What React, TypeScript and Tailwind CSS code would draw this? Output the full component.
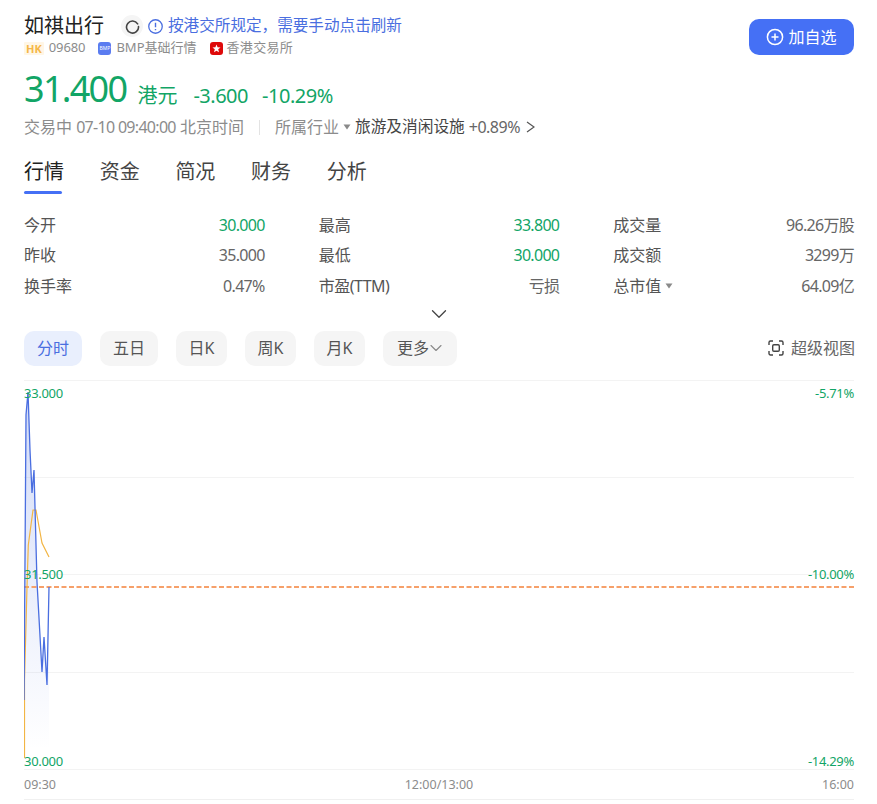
import { ChevronDown } from "lucide-react";

const font = "font-['Noto_Sans','Noto_Sans_CJK_SC',sans-serif]";

const stats = [
  { label: "今开", value: "30.000", green: true },
  { label: "最高", value: "33.800", green: true },
  { label: "成交量", value: "96.26万股" },
  { label: "昨收", value: "35.000" },
  { label: "最低", value: "30.000", green: true },
  { label: "成交额", value: "3299万" },
  { label: "换手率", value: "0.47%" },
  { label: "市盈(TTM)", value: "亏损", tight: true },
  { label: "总市值", value: "64.09亿", caret: true },
];

const tabs = ["行情", "资金", "简况", "财务", "分析"];
const ranges = ["五日", "日K", "周K", "月K"];

function Caret() {
  return (
    <svg width="8" height="6" viewBox="0 0 8 6" className="ml-1">
      <path d="M0.5 0.5h7L4 5.5z" fill="#8a8a8a" />
    </svg>
  );
}

function Chart() {
  // coordinates are page pixels minus the chart's top-left (24, 380)
  const blue = "M0 320L1 180L2 35L4 12L6 70L8 113L10 90L13 202L18 292L20 257L23 305L25 207";
  const orange = "M0.5 378L0.5 300L3 207L4.3 165L9 130L12 130L18 163L25 177";
  return (
    <svg width="830" height="390" viewBox="0 0 830 390" className="block">
      <defs>
        <linearGradient id="area" x1="0" y1="0" x2="0" y2="1">
          <stop offset="0" stopColor="#4a6ee0" stopOpacity="0.25" />
          <stop offset="1" stopColor="#4a6ee0" stopOpacity="0" />
        </linearGradient>
      </defs>
      {[0.5, 97.5, 194.5, 292.5, 389.5].map((y) => (
        <line key={y} x1="0" x2="830" y1={y} y2={y} stroke="#f3f3f3" />
      ))}
      <path d={blue + "L25 370L0 370Z"} fill="url(#area)" />
      <line x1="0" x2="830" y1="207" y2="207" stroke="#f6a06a" strokeWidth="2" strokeDasharray="5 2.5" />
      <path d={orange} fill="none" stroke="#f2b544" strokeWidth="1.2" />
      <path d={blue} fill="none" stroke="#4a6ee0" strokeWidth="1.3" />
    </svg>
  );
}

export default function App() {
  return (
    <main className={`${font} w-[877px] h-[804px] overflow-hidden bg-white pl-6 pr-[23px] pt-[14px] text-[#333]`}>
      <header className="flex items-start justify-between">
        <div>
          <div className="flex items-center h-[24px]">
            <h1 className="text-xl leading-6 text-[#222]">如祺出行</h1>
            <span className="ml-[17px] flex h-[22px] w-[22px] items-center justify-center rounded-full bg-[#f5f5f5]">
              <svg width="15" height="15" viewBox="0 0 14 14" fill="none">
                <path d="M11.8 4.6A5.6 5.6 0 1 0 12.6 7" stroke="#444" strokeWidth="1.5" strokeLinecap="round" />
              </svg>
            </span>
            <svg width="15" height="15" viewBox="0 0 14 14" fill="none" className="ml-[5px]">
              <circle cx="7" cy="7" r="6.3" stroke="#4a6ee0" strokeWidth="1.2" />
              <path d="M7 3.5v4.2M7 9.4v1" stroke="#4a6ee0" strokeWidth="1.3" />
            </svg>
            <span className="ml-[5px] text-[15.6px] text-[#4a6ee0]">按港交所规定，需要手动点击刷新</span>
          </div>
          <div className="mt-[1px] flex h-[18px] items-center text-[13px] text-[#8c8c8c]">
            <span className="rounded-[1px] bg-[#fff6e6] px-[2px] text-[11px] leading-[13px] font-bold text-[#f5b748]">HK</span>
            <span className="ml-[5px] tracking-[-0.1px]">09680</span>
            <span className="ml-[13px] flex h-[13px] w-[13px] items-center justify-center rounded-[3px] bg-[#5b7cf0] text-[5px] leading-none text-white">BMP</span>
            <span className="ml-[5px]">BMP基础行情</span>
            <span className="ml-[13px] flex h-[13px] w-[13px] items-center justify-center rounded-[3px] bg-[#de0a0a]">
              <svg width="9" height="9" viewBox="0 0 10 10">
                <path d="M5 0.5L6.2 3.6L9.5 3.8L6.9 5.9L7.8 9.2L5 7.4L2.2 9.2L3.1 5.9L0.5 3.8L3.8 3.6Z" fill="white" />
              </svg>
            </span>
            <span className="ml-[4px] tracking-[0.3px]">香港交易所</span>
          </div>
        </div>
        <button className="mt-[5px] flex h-[36px] w-[105px] items-center justify-center gap-[4px] rounded-[10px] bg-[#4570f5] text-base text-white">
          <svg width="18" height="18" viewBox="0 0 18 18" fill="none" stroke="white" strokeWidth="1.5">
            <circle cx="9" cy="9" r="7.6" />
            <path d="M9 5.5v7M5.5 9h7" />
          </svg>
          加自选
        </button>
      </header>

      <div className="mt-[10px] flex h-[44px] items-end text-[#12a566]">
        <span className="text-[36px] leading-[44px] tracking-[-1.7px]">31.400</span>
        <span className="ml-[11px] mb-[3px] text-xl leading-6">港元</span>
        <span className="ml-[16px] mb-[3px] text-xl leading-6 tracking-[-0.5px]">-3.600</span>
        <span className="ml-[14px] mb-[3px] text-xl leading-6 tracking-[-0.45px]">-10.29%</span>
      </div>

      <div className="mt-[6px] flex h-[20px] items-center text-base text-[#8c8c8c]">
        <span>
          交易中 <span className="tracking-[-0.7px]">07-10 09:40:00</span> 北京时间
        </span>
        <span className="ml-[15px] mr-[15px] h-[15px] w-px bg-[#e3e3e3]" />
        <span>所属行业</span>
        <Caret />
        <span className="ml-[4px] text-[15.7px] text-[#444]">旅游及消闲设施</span>
        <span className="ml-[4px] tracking-[-0.5px] text-[#666]">+0.89%</span>
        <svg width="9" height="12" viewBox="0 0 9 12" fill="none" stroke="#555" strokeWidth="1.2" className="ml-[6px]">
          <path d="M1 1l7 5l-7 5" />
        </svg>
      </div>

      <nav className="mt-[21px] flex h-[51.5px] gap-[35.7px] text-[#444]">
        {tabs.map((tab, i) => (
          <div key={tab} className="relative h-[52px] text-xl leading-7">
            <span className={i === 0 ? "text-[#222]" : ""}>{tab}</span>
            {i === 0 && <span className="absolute bottom-[16px] left-0 h-[3px] w-[38px] rounded-sm bg-[#4570f5]" />}
          </div>
        ))}
      </nav>

      <section className="grid grid-cols-3 gap-x-[54px] text-base">
        {stats.map((s) => (
          <div key={s.label} className="flex h-[30.5px] items-center justify-between">
            <span className={`flex items-center text-[#555] ${s.tight ? "tracking-[-0.5px]" : ""}`}>
              {s.label}
              {s.caret && <Caret />}
            </span>
            <span className={`tracking-[-0.7px] ${s.green ? "text-[#12a566]" : "text-[#666]"}`}>{s.value}</span>
          </div>
        ))}
      </section>

      <div className="flex h-[21.5px] items-center justify-center pt-[4px]">
        <ChevronDown size={26} strokeWidth={1.2} className="text-[#444]" />
      </div>

      <div className="mt-[8px] flex items-center justify-between">
        <div className="flex gap-[18px] text-base text-[#555]">
          <span className="flex h-[35px] w-[58px] items-center justify-center rounded-[10px] bg-[#e9effd] text-[#4a6ee0]">分时</span>
          {ranges.map((r, i) => (
            <span key={r} className={`flex h-[35px] items-center justify-center rounded-[10px] bg-[#f5f5f5] ${i === 0 ? "w-[58px]" : "w-[51px]"}`}>
              {r}
            </span>
          ))}
          <span className="flex h-[35px] w-[74px] items-center justify-center rounded-[10px] bg-[#f5f5f5]">
            更多
            <ChevronDown size={20} strokeWidth={1.3} className="-mr-[3px] -ml-[3px] text-[#888]" />
          </span>
        </div>
        <div className="-mr-px flex items-center gap-[7px] text-base text-[#666]">
          <svg width="16" height="16" viewBox="0 0 16 16" fill="none" stroke="#444" strokeWidth="1.4">
            <path d="M1 5V2.5A1.5 1.5 0 0 1 2.5 1H5M11 1h2.5A1.5 1.5 0 0 1 15 2.5V5M15 11v2.5a1.5 1.5 0 0 1-1.5 1.5H11M5 15H2.5A1.5 1.5 0 0 1 1 13.5V11" />
            <rect x="4.7" y="4.7" width="6.6" height="6.6" rx="1.2" />
          </svg>
          超级视图
        </div>
      </div>

      <div className="relative mt-[14px] h-[390px] text-[13px] leading-4 tracking-[-0.3px] text-[#12a566]">
        <Chart />
        <span className="absolute left-0 top-[5px]">33.000</span>
        <span className="absolute right-0 top-[5px]">-5.71%</span>
        <span className="absolute left-0 top-[186px]">31.500</span>
        <span className="absolute right-0 top-[186px]">-10.00%</span>
        <span className="absolute left-0 top-[373px]">30.000</span>
        <span className="absolute right-0 top-[373px]">-14.29%</span>
      </div>

      <div className="flex h-[30px] items-center justify-between border-b border-[#f0f0f0] pt-[3px] text-[12.5px] text-[#8c8c8c]">
        <span>09:30</span>
        <span>12:00/13:00</span>
        <span>16:00</span>
      </div>
    </main>
  );
}
